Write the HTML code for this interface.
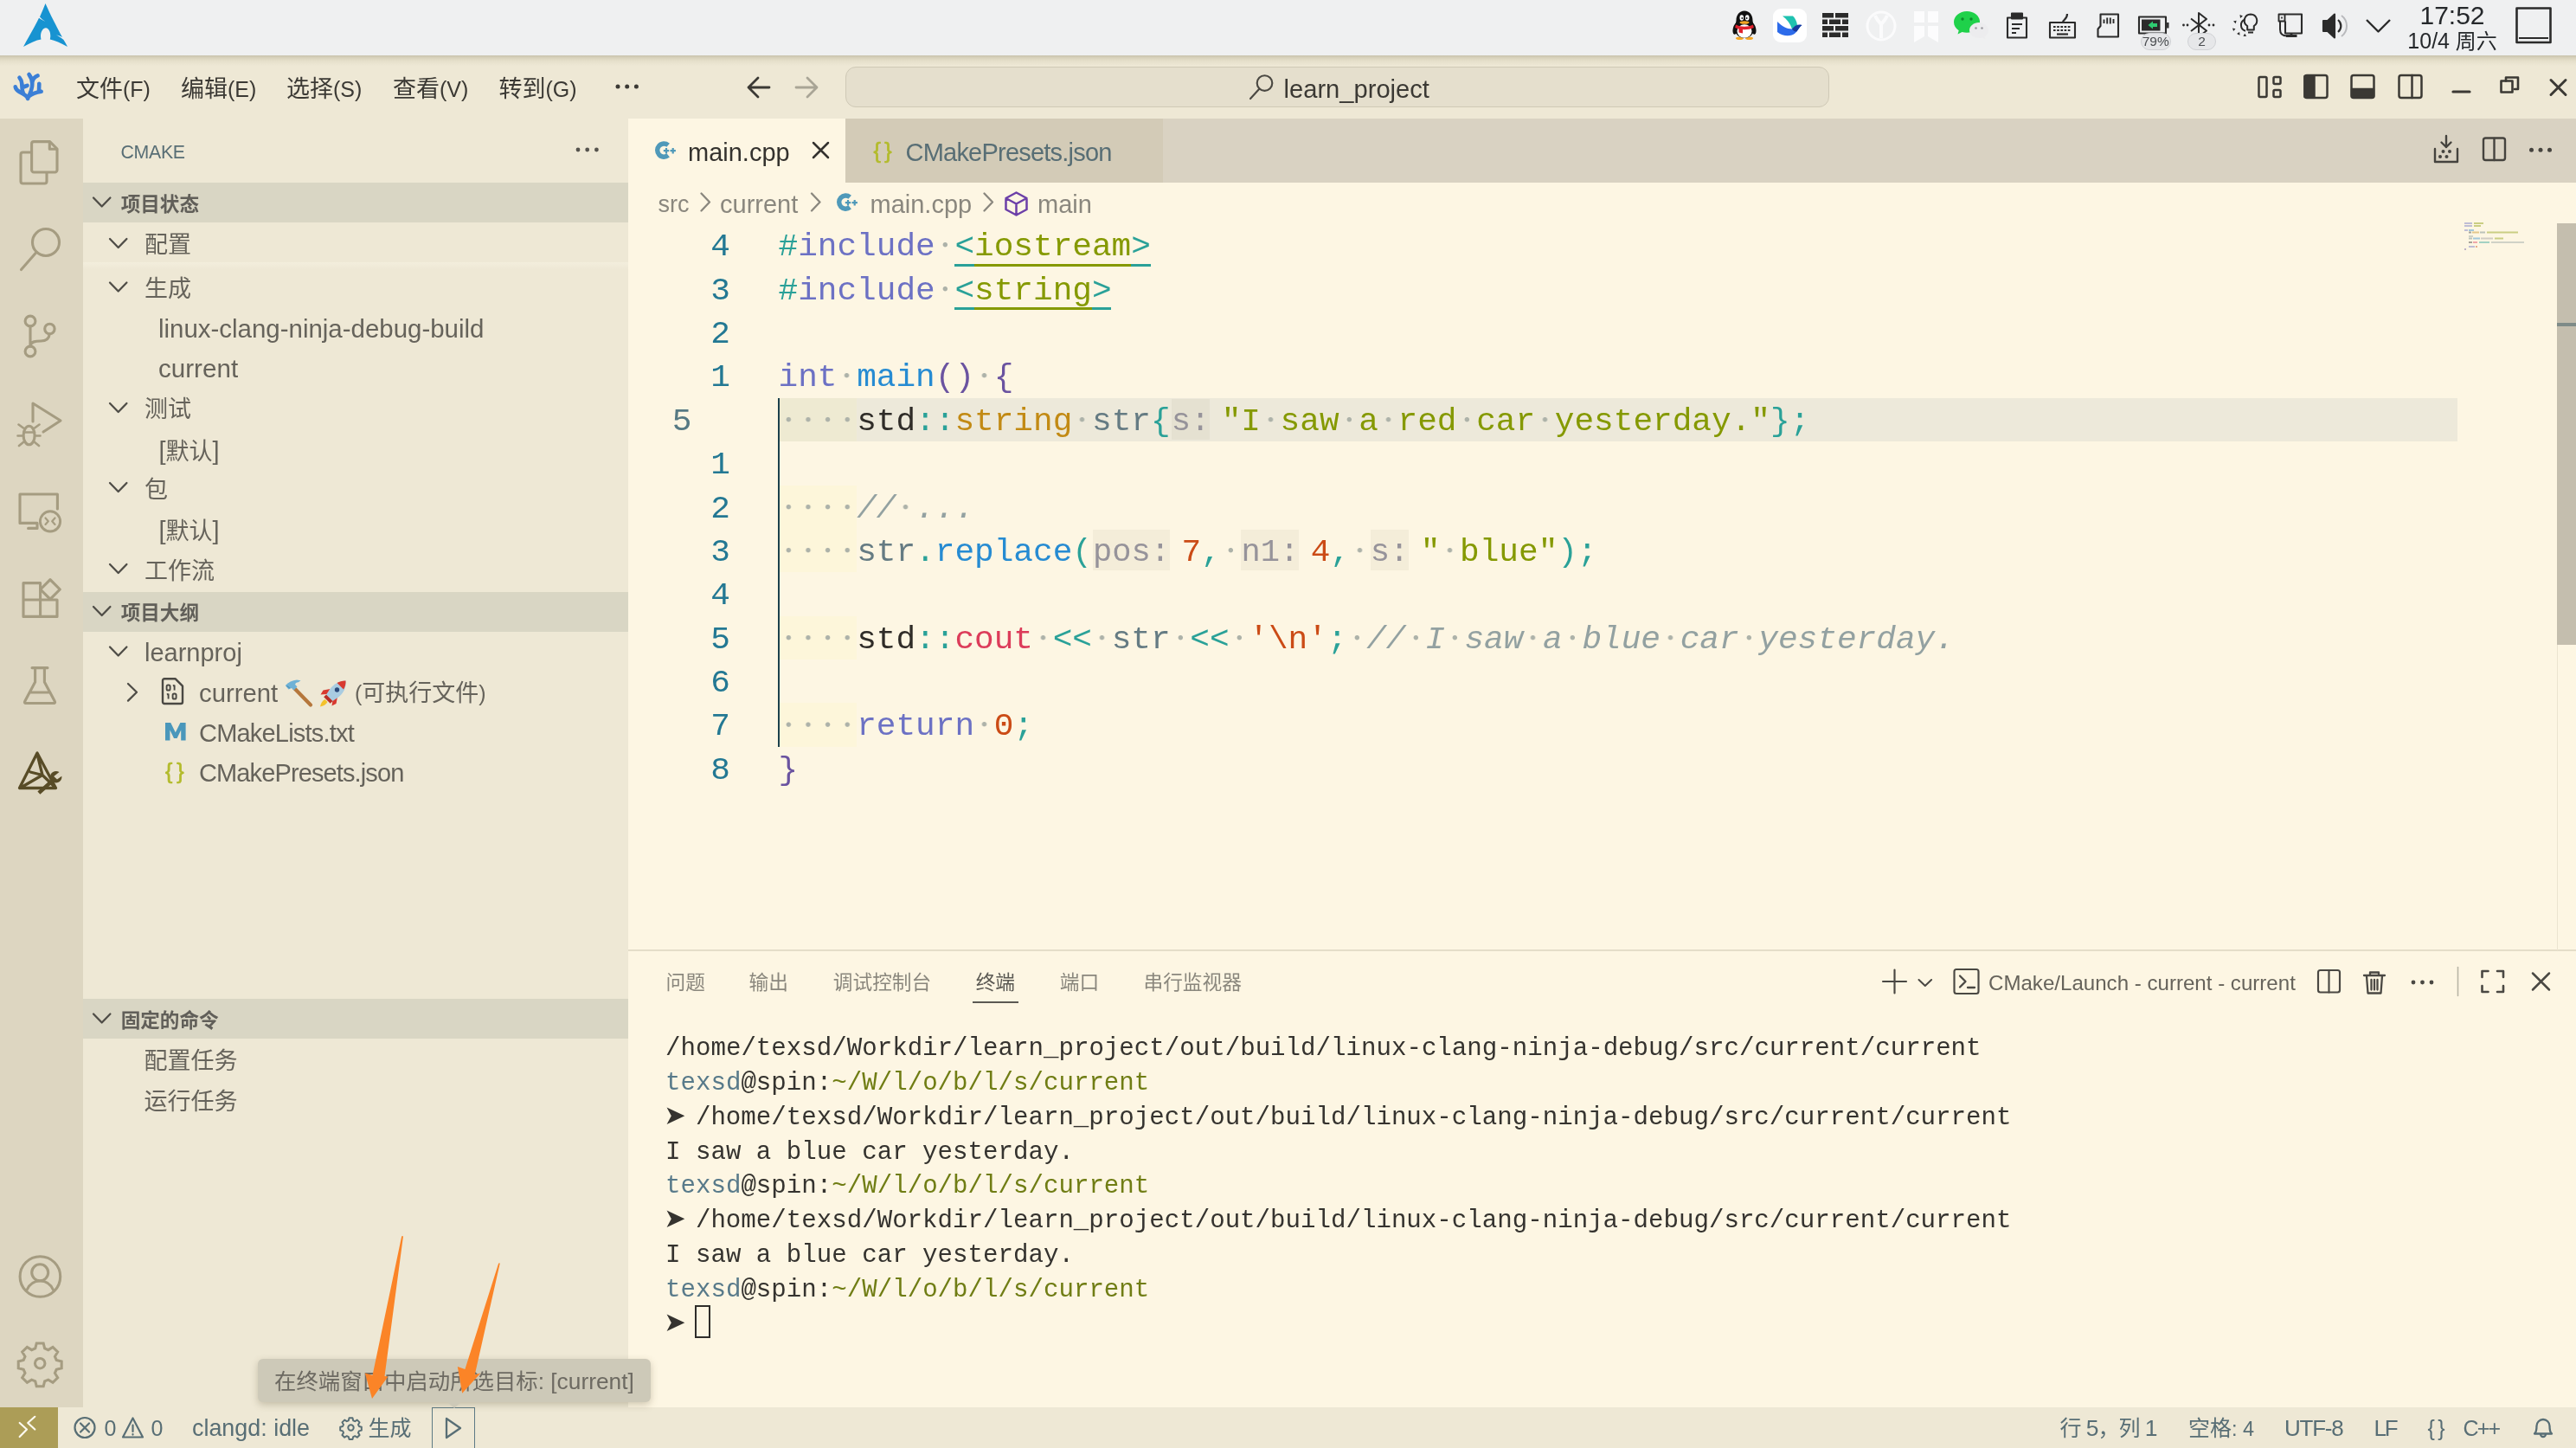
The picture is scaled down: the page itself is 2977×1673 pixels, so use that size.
<!DOCTYPE html>
<html lang="zh-CN">
<head>
<meta charset="utf-8">
<title>main.cpp - learn_project</title>
<style>
*{box-sizing:border-box;margin:0;padding:0}
html,body{width:2977px;height:1673px;overflow:hidden;background:#fdf6e3}
body{position:relative;will-change:transform;font-family:"Liberation Sans","Noto Sans CJK SC",sans-serif;color:#66635b;font-size:27px}
.a{position:absolute}
.t{position:absolute;white-space:nowrap;height:46px;line-height:46px}
.l{font-size:29px}
.m{font-size:25px}
svg{position:absolute;overflow:visible}
/* ---------- regions ---------- */
#topbar{left:0;top:0;width:2977px;height:64px;background:#eff0f1}
#topshadow{left:0;top:64px;width:2977px;height:12px;background:linear-gradient(#c8c2ac,#d9d3bd 25%,#e6e0cb 55%,#eee8d5)}
#titlebar{left:0;top:64px;width:2977px;height:73px;background:#eee8d5}
#activity{left:0;top:137px;width:96px;height:1489px;background:#ddd6c1}
#sidebar{left:96px;top:137px;width:630px;height:1489px;background:#eee8d5}
#tabbar{left:726px;top:137px;width:2251px;height:74px;background:#d9d2c2}
#editor{left:726px;top:211px;width:2251px;height:887px;background:#fdf6e3}
#panel{left:726px;top:1097px;width:2251px;height:529px;background:#fdf6e3;border-top:2px solid #e4ddc9}
#status{left:0;top:1626px;width:2977px;height:47px;background:#eee8d5}
.sech{position:absolute;left:96px;width:630px;height:46px;background:#d9d6c4}
.sech b{position:absolute;left:43.700px;top:2.500px;height:46px;line-height:45px;font-size:22.6px;font-weight:bold;color:#615f59;white-space:nowrap}
.row{color:#66635b}
/* code */
.cl{position:absolute;left:899.5px;height:50.4px;line-height:54.4px;white-space:pre;font-family:"Liberation Mono","DejaVu Sans Mono",monospace;font-size:37.75px;color:#657b83}
.ln{position:absolute;height:50.4px;line-height:54.4px;font-family:"Liberation Mono","DejaVu Sans Mono",monospace;font-size:37.75px;color:#237893;text-align:right;width:60px;left:784px}
.w{color:transparent;background:radial-gradient(circle at 50% 44.5%,#adb2a9 0,#adb2a9 2.2px,rgba(173,178,169,0) 3.2px) 0 0/22.65px 100% repeat-x}
.tl{color:#2aa198}.pu{color:#6c71c4}.gr{color:#859900}.bl{color:#268bd2}.dp{color:#6a53a0}.bk{color:#2f2c28}
.ye{color:#c28a14}.or{color:#cb4b16}.rd{color:#dc3c5a}.cm{color:#93a1a1;font-style:italic}
.ih{display:inline-block;margin:0 13.5px 0 1px;font-size:37.1px;line-height:52.4px;height:47.4px;vertical-align:top;margin-top:1.2px;background:rgba(110,100,60,.06);color:#96939a}
.ind{display:inline-block;height:50.4px;vertical-align:top;background:radial-gradient(circle at 50% 49.3%,#adb2a9 0,#adb2a9 2.2px,rgba(173,178,169,0) 3.2px) 0 0/22.65px 100% repeat-x,rgba(255,255,64,.055)}
/* terminal */
.tr{position:absolute;left:769px;height:39.85px;line-height:39.85px;white-space:pre;font-family:"Liberation Mono","DejaVu Sans Mono",monospace;font-size:29.13px;color:#35332f}
.tu{color:#587a8a}.tp{color:#707d14}
.ar{display:inline-block;width:17.450px;font-size:43px;line-height:0;vertical-align:-6px;text-indent:-1px}
.pt{position:absolute;top:1112px;height:46px;line-height:46px;font-size:22.7px;color:#8a877d;white-space:nowrap}
.st{position:absolute;top:1627px;height:46px;line-height:46px;font-size:25px;color:#586e75;white-space:nowrap}
.st .l{font-size:26.5px}
</style>
</head>
<body>
<div class="a" id="topbar"></div>
<div class="a" id="titlebar"></div>
<div class="a" id="topshadow"></div>
<div class="a" id="activity"></div>
<div class="a" id="sidebar"></div>
<div class="a" id="tabbar"></div>
<div class="a" id="editor"></div>
<div class="a" id="panel"></div>
<div class="a" id="status"></div>
<!-- desktop panel -->
<svg style="left:27px;top:4px" width="51" height="50" viewBox="0 0 51 50"><path d="M25.500 0C23 6 21.500 10 19 15.500c1.500 1.700 3.500 3.500 6.500 5.500c-3.500-1.500-5.500-2.800-7.500-4.200C15.500 22.500 10 32 0 50c8-4.500 14.500-7.500 20.500-8.500c-.3-1-.5-2.500-.5-4c.2-5.500 3-9.500 6-9.300c3.500 .3 5.500 4.800 5.300 9.800c-.1 1.200-.3 2.500-.5 3.500c5.700 1.100 12.200 4 20.200 8.500c-1.500-3-3-5.500-4.500-8c-2-1.500-4-3.500-8.500-5.800c3 .8 5.200 1.800 7 2.800C32 14.500 30.500 11 25.500 0z" fill="#1793d1"/></svg>
<!-- QQ penguin -->
<svg style="left:2000px;top:12px" width="32" height="35" viewBox="0 0 32 35"><ellipse cx="6" cy="21" rx="3.200" ry="7" transform="rotate(14 6 21)" fill="#111"/><ellipse cx="26" cy="21" rx="3.200" ry="7" transform="rotate(-14 26 21)" fill="#111"/><ellipse cx="10.500" cy="32.300" rx="4.500" ry="1.800" fill="#f5a623"/><ellipse cx="21.500" cy="32.300" rx="4.500" ry="1.800" fill="#f5a623"/><path d="M16 0.500c-6 0-9.500 5-9.500 11c0 2-1 4-1.500 6c-1.500 6 2 14.500 11 14.500s12.500-8.500 11-14.500c-.5-2-1.500-4-1.500-6c0-6-3.500-11-9.500-11z" fill="#111"/><ellipse cx="16" cy="24" rx="8.500" ry="7.800" fill="#fff"/><path d="M6 16.500c6 3 14 3 20 0l.8 3.500c-6.500 3-15 3-21.600 0z" fill="#e0202c"/><path d="M9.500 19h4.500v7.500l-4.500-1z" fill="#e0202c"/><ellipse cx="12.800" cy="8.500" rx="2.300" ry="3.200" fill="#fff"/><ellipse cx="19.200" cy="8.500" rx="2.300" ry="3.200" fill="#fff"/><circle cx="13.400" cy="9" r="1" fill="#111"/><circle cx="18.600" cy="9" r="1" fill="#111"/><ellipse cx="16" cy="14" rx="5.500" ry="1.800" fill="#f5a623"/></svg>
<!-- feishu-like -->
<div class="a" style="left:2049px;top:10px;width:39px;height:39px;border-radius:9px;background:#fff"></div>
<svg style="left:2049px;top:10px" width="39" height="39" viewBox="0 0 39 39"><path d="M11 8.500h12c3 3 4.500 6.500 5 10.500l-6 4.500C20 17 16 12 11 8.500z" fill="#1fc2b0"/><path d="M5 15c5 5 11 8.500 17 8.500c3.500-3.500 7-5 11.500-4.500c-3 2-4.500 6-7.500 9c-5 4.500-14 4.500-21-1z" fill="#2d6bea"/><path d="M22 23.500c3-4 7-6 11.500-4.500c-2.500 1.500-4 4.500-6 7.500c-2 .5-4-1-5.500-3z" fill="#173a9e"/></svg>
<!-- firewall bricks -->
<svg style="left:2106px;top:15px" width="30" height="28" viewBox="0 0 30 28" fill="#2b2b2b"><rect x="0" y="0" width="13" height="5.500"/><rect x="15" y="0" width="15" height="5.500"/><rect x="0" y="7.500" width="6" height="5.500"/><rect x="8" y="7.500" width="13" height="5.500"/><rect x="23" y="7.500" width="7" height="5.500"/><rect x="0" y="15" width="13" height="5.500"/><rect x="15" y="15" width="15" height="5.500"/><rect x="0" y="22.500" width="6" height="5.500"/><rect x="8" y="22.500" width="13" height="5.500"/><rect x="23" y="22.500" width="7" height="5.500"/></svg>
<!-- white circle Y -->
<svg style="left:2156px;top:12px" width="36" height="36" fill="none" stroke="#fbfbfc" stroke-width="3"><circle cx="18" cy="18" r="16"/><path d="M11 6c2 5 5 8 7 10c2-2 5-5 7-10M18 16v16" stroke-width="4"/></svg>
<!-- white bookmark -->
<svg style="left:2212px;top:13px" width="28" height="36" fill="#fcfcfd"><path d="M0 0h12v13H0zM16 0h12v13H16zM0 17h12v12l-12 7zM16 17h12v19l-12-7z"/></svg>
<!-- wechat -->
<svg style="left:2258px;top:12px" width="40" height="34" viewBox="0 0 40 34"><path d="M15 1C6.700 1 0 6.600 0 13.500c0 4 2.200 7.500 5.700 9.800L4.500 27.500l5-2.600c1.700 .5 3.600 .8 5.500 .8c8.300 0 15-5.600 15-12.500S23.300 1 15 1z" fill="#1fd14a"/><circle cx="10" cy="10" r="1.700" fill="#0c8a2c"/><circle cx="20" cy="10" r="1.700" fill="#0c8a2c"/><path d="M29 14c-6 0-11 4-11 9s5 9 11 9c1.300 0 2.600-.2 3.800-.6l3.700 1.900l-.9-3.100c2.700-1.700 4.400-4.300 4.400-7.200c0-5-5-9-11-9z" fill="#ececee"/><circle cx="25.500" cy="20.500" r="1.300" fill="#9a9a9f"/><circle cx="32.500" cy="20.500" r="1.300" fill="#9a9a9f"/></svg>
<!-- clipboard, keyboard, sdcard, battery, bluetooth, bulb, monitor, volume, chevron, desktop -->
<svg style="left:2300px;top:0" width="677" height="64" fill="none" stroke="#2b2b2b" stroke-width="2.100" stroke-linejoin="round">
<rect x="20" y="20.500" width="22" height="23"/><rect x="25" y="15.500" width="12" height="6" fill="#2b2b2b"/><path d="M25 28h12M25 33h9M25 38h5" stroke-width="2"/>
<rect x="69" y="26" width="29" height="17.500"/><path d="M84 26c0-4 5-3 5-10" stroke-width="2.200"/><path d="M73 31h21M73 35h21" stroke-width="2.200" stroke-dasharray="2.600 1.600"/><path d="M77 39.500h13" stroke-width="2.200"/>
<path d="M127.500 16.500h20.500v26h-23.500v-9l3-3.500z"/><path d="M131.500 22.500v4.500M135.200 20.500v7M138.800 20.500v7M142.500 22v5" stroke-width="1.900"/>
<rect x="172" y="19.500" width="31" height="19"/><path d="M205.300 26v6.500" stroke-width="2.400"/><rect x="175" y="22.500" width="21.500" height="13" fill="#2b2b2b" stroke="none"/><path d="M182.500 29l5.500-4.500v2.500h5v4h-5V33.500z" fill="#2ecc71" stroke="none"/>
<path d="M232 21.500l18 14l-9 7V15l9 7l-18 14" stroke-width="2"/><g fill="#2b2b2b" stroke="none"><circle cx="223.500" cy="29" r="1.400"/><circle cx="228" cy="29" r="1.400"/><circle cx="253" cy="29" r="1.400"/><circle cx="258" cy="29" r="1.400"/></g>
<path d="M301 16.500a7.300 7.300 0 0 1 3.800 13.500v4.500h-7.600v-4.500A7.300 7.300 0 0 1 301 16.500zM298 37.500h6" stroke-width="2"/><path d="M294.500 22.500a7 7 0 0 0 .5 13.300" stroke-width="2"/><g fill="#2b2b2b" stroke="none"><path d="M288.500 17l3.400 1.600l-2.900 2.300zM281 24.500l3.600-.8l-.9 3.500zM280 32.500l3.500 .8l-2.400 2.700zM285 39l3.100-1.900l.4 3.600zM292.500 42l1.600-3.300l2.100 3z"/></g>
<path d="M341 24.500v14h19v-22h-19"/><rect x="333.500" y="16.500" width="7" height="8" stroke-width="1.900"/><path d="M337 19.500v2" stroke-width="1.700"/><path d="M335 25v9c0 5 3 7.500 8 7.500" stroke-width="2"/><path d="M342 41.500h12.500M348 39v2" stroke-width="2.800"/>
<path d="M385 24h5l8-7.500v27l-8-7.500h-5z" fill="#2b2b2b"/><path d="M402 23a9 9 0 0 1 0 14" stroke-width="2.200"/><path d="M406 18a15 15 0 0 1 0 24" stroke="#b9babd" stroke-width="2"/>
<path d="M435 23l13.500 13.500L462 23" stroke-width="2.400"/>
<rect x="608.500" y="9.500" width="39" height="39.500" stroke-width="2.600"/><path d="M611 44h34" stroke-width="2.200"/>
</svg>
<div class="a" style="left:2474px;top:37.500px;width:34.500px;height:20px;border-radius:10px;background:#e6e7e9;border:1px solid #cfd1d4"></div>
<div class="t" style="left:2474px;top:37.500px;width:34.500px;height:20px;line-height:20px;text-align:center;font-size:15.500px;color:#4a4d50">79%</div>
<div class="a" style="left:2528px;top:37.500px;width:33px;height:20px;border-radius:10px;background:#e6e7e9;border:1px solid #cfd1d4"></div>
<div class="t" style="left:2528px;top:37.500px;width:33px;height:20px;line-height:20px;text-align:center;font-size:15.500px;color:#4a4d50">2</div>
<div class="t" style="left:2780px;top:1px;width:108px;height:34px;line-height:34px;text-align:center;font-size:30px;color:#25282b">17:52</div>
<div class="t" style="left:2775px;top:31px;width:118px;height:32px;line-height:32px;text-align:center;font-size:24px;color:#25282b"><span style="font-size:25px">10/4</span> 周六</div>

<!-- title bar -->
<svg style="left:0;top:0" width="70" height="130" fill="none" stroke="#3b7fd6" stroke-width="4.600" stroke-linecap="round" stroke-linejoin="round"><path d="M32.200 114C31 110 27 108.500 23 106.500C19.500 104.500 18 102.500 17.700 100.200M27 108C25 104 25.500 100 25.300 96.700C25 93.500 24 91.500 22.500 89.800M25.800 101C28 100 30 99.500 31.500 98.800M32.200 113.500C35 108 37.500 102 37.300 96.700C37 92 35.500 88.500 33.500 86M37.300 95C38 91 40.500 88.500 43.600 87.400M33 111.500C37 108 42 106.500 47.700 105.700M45 105.500L45.300 96.700"/></svg>
<div class="t" style="left:88px;top:79.500px;color:#3b3934">文件<span class="m">(F)</span></div>
<div class="t" style="left:209px;top:79.500px;color:#3b3934">编辑<span class="m">(E)</span></div>
<div class="t" style="left:331px;top:79.500px;color:#3b3934">选择<span class="m">(S)</span></div>
<div class="t" style="left:454px;top:79.500px;color:#3b3934">查看<span class="m">(V)</span></div>
<div class="t" style="left:576.500px;top:79.500px;color:#3b3934">转到<span class="m">(G)</span></div>
<svg style="left:710px;top:95px" width="30" height="10"><g fill="#3b3934"><circle cx="4" cy="5" r="2.500"/><circle cx="14.700" cy="5" r="2.500"/><circle cx="25.400" cy="5" r="2.500"/></g></svg>
<svg style="left:860px;top:85px" width="90" height="32" fill="none" stroke-width="2.800" stroke-linecap="round" stroke-linejoin="round"><path d="M29 16H5M16 5L5 16l11 11" stroke="#3b3934"/><path d="M60 16h24M73 5l11 11l-11 11" stroke="#a9a596"/></svg>
<div class="a" style="left:977px;top:77px;width:1137px;height:47px;border-radius:12px;background:#e5dfcd;border:1.500px solid #cfc9b6"></div>
<svg style="left:1443px;top:85px" width="30" height="31" fill="none" stroke="#4a4842" stroke-width="2.150" stroke-linecap="round"><circle cx="18.500" cy="11" r="8.800"/><path d="M12.500 17.500L2 29"/></svg>
<div class="t l" style="left:1483.500px;top:79.500px;color:#3b3934;font-size:29.150px">learn_project</div>
<svg style="left:2600px;top:80px" width="377" height="42" fill="none" stroke="#3b3934" stroke-width="2.500" stroke-linejoin="round" stroke-linecap="round">
<rect x="10.500" y="9" width="9" height="23" rx="1.500"/><rect x="27.500" y="9" width="8" height="8" rx="1.500"/><rect x="27.500" y="24" width="8" height="8" rx="1.500"/>
<rect x="63.500" y="7" width="26" height="26" rx="2.500"/><path d="M63.500 8h11v24h-11z" fill="#3b3934"/>
<rect x="117.500" y="7" width="26" height="26" rx="2.500"/><path d="M118 23h25v9h-25z" fill="#3b3934"/>
<rect x="172.500" y="7" width="26" height="26" rx="2.500"/><path d="M187.500 7v26"/>
<path d="M235 26h19" stroke-width="3.200"/>
<path d="M296 13.500v-4h14v13.500h-4" stroke-width="2.600"/><rect x="290.500" y="13.500" width="13" height="13" stroke-width="2.600"/>
<path d="M348 15.500l17 17M365 15.500l-17 17" stroke-width="3" transform="translate(0,-3)"/>
</svg>

<!-- activity bar -->
<svg style="left:0;top:137px" width="96" height="1489" fill="none" stroke="#a59c81" stroke-width="3.100" stroke-linecap="round" stroke-linejoin="round">
<!-- files  (y offset -137) -->
<path d="M39.100 26.600h18.500l8.400 8.400v24.500a2.500 2.500 0 0 1-2.500 2.500h-24.400a2.500 2.500 0 0 1-2.500-2.500v-30.400a2.500 2.500 0 0 1 2.500-2.500z"/><path d="M57.300 27v8.300h8.300"/><path d="M36 39h-9.500a2.500 2.500 0 0 0-2.500 2.500v31a2.500 2.500 0 0 0 2.500 2.500h25a2.500 2.500 0 0 0 2.500-2.500v-10"/>
<!-- search -->
<circle cx="53" cy="143" r="15.500"/><path d="M42 154.500L24.500 174.500"/>
<!-- scm -->
<circle cx="35" cy="234" r="5.900"/><circle cx="35" cy="269" r="5.900"/><circle cx="57.400" cy="243" r="5.700"/><path d="M35 240v23M57.200 249c-.5 5.500-4.500 8-10 8c-6 0-11 .5-12 5"/>
<!-- debug -->
<path d="M38 350v-21l32 20l-20 13"/><ellipse cx="33.600" cy="366" rx="6.500" ry="10.800"/><path d="M27.500 362.500h12.500M27 357.500l-5.500-4M40 357.500l5.500-4M26.500 366.500h-6M40.500 366.500h6M27.500 373.500l-5.500 4.500M39.500 373.500l5.500 4.500" stroke-width="2.600"/>
<!-- remote explorer -->
<path d="M66.400 451v-17h-43.400v33.400h20v6h-10.400"/><circle cx="58" cy="465.400" r="11.600" stroke-width="2.900"/><path d="M52.500 461.500l3.300 3.700l-3.300 3.700M63.500 461.500l-3.300 3.700l3.300 3.700" stroke-width="2.200"/>
<!-- extensions -->
<path d="M27 536.600h19.600v19.400h-19.600zM27 556h39v19.400h-39zM46.600 556v19.400"/><rect x="50" y="536" width="16" height="16" transform="rotate(45 58 544)"/>
<!-- flask -->
<path d="M37 634.600h18M40.600 635v16l-12 22.500a1.300 1.300 0 0 0 1.200 2h32.400a1.300 1.300 0 0 0 1.200-2l-12-22.500v-16M34.500 663h23.500"/>
<!-- cmake active -->
<g stroke="#584c27" stroke-width="3.300"><path d="M43 733l-20.500 40.500h42zM43 734l6 24.500l-25 14.500M49 758.500l14 13.500M35 755l14 3.500"/></g>
<path d="M68.500 755c-3.500-2.200-8-1-9.800 2.500c-1 2.300-.8 4.300 .2 6l-15.500 14l3 3.300l15.500-14c2.500 1.200 6 .8 8.200-2c1.200-1.500 1.500-3.500 1.200-5l-5.300 3.800l-3.800-3.600z" fill="#584c27" stroke="none"/>
<!-- account -->
<circle cx="46.400" cy="1338" r="23.300"/><circle cx="46.200" cy="1333.300" r="9.500"/><path d="M31 1353.500c3-7 8-10.500 15.300-10.500s12.300 3.500 15.300 10.500"/>
<!-- gear -->
<g transform="translate(46.200 1438.200) scale(.990)" stroke-linejoin="miter"><circle r="5.800"/><path d="M-4-23.500h8l1.500 6l4.200 1.800l5.300-3.300l5.700 5.700l-3.300 5.300l1.800 4.200l6 1.500v8l-6 1.500l-1.800 4.200l3.300 5.300l-5.700 5.700l-5.300-3.300l-4.200 1.800l-1.500 6h-8l-1.500-6l-4.200-1.800l-5.300 3.300l-5.700-5.700l3.300-5.300l-1.800-4.200l-6-1.500v-8l6-1.500l1.800-4.200l-3.300-5.300l5.700-5.700l5.300 3.300l4.200-1.800z"/></g>
</svg>

<!-- sidebar -->
<div class="t" style="left:139.5px;top:153px;font-size:21.300px;color:#586e75;letter-spacing:-.3px">CMAKE</div>
<svg style="left:664px;top:168px" width="30" height="10"><g fill="#55534d"><circle cx="4" cy="5" r="2.4"/><circle cx="14.7" cy="5" r="2.4"/><circle cx="25.4" cy="5" r="2.4"/></g></svg>
<div class="sech" style="top:211px"><b>项目状态</b></div>
<div class="sech" style="top:683.7px"><b>项目大纲</b></div>
<div class="sech" style="top:1154px"><b>固定的命令</b></div>
<div class="a" style="left:96px;top:303px;width:630px;height:8px;background:linear-gradient(#f3eedd,#eee8d5)"></div>
<svg style="left:0;top:0" width="740" height="1300" fill="none" stroke="#4f4d47" stroke-width="2.300" stroke-linecap="round" stroke-linejoin="round">
<path d="M108 228.5l9.700 10l9.700-10"/>
<path d="M108 701l9.700 10l9.700-10"/>
<path d="M108 1171.5l9.700 10l9.700-10"/>
<path d="M127 276l9.700 10l9.700-10"/>
<path d="M127 326.5l9.700 10l9.700-10"/>
<path d="M127 466l9.700 10l9.700-10"/>
<path d="M127 558l9.700 10l9.700-10"/>
<path d="M127 652l9.700 10l9.700-10"/>
<path d="M127 747.5l9.700 10l9.700-10"/>
<path d="M148 790l10 9.800l-10 9.800"/>
</svg>
<div class="t row" style="left:167px;top:260px">配置</div>
<div class="t row" style="left:167px;top:310.500px">生成</div>
<div class="t row l" style="left:183px;top:356.500px;font-size:29.450px">linux-clang-ninja-debug-build</div>
<div class="t row l" style="left:183px;top:402.500px;font-size:29.600px">current</div>
<div class="t row" style="left:167px;top:450px">测试</div>
<div class="t row" style="left:183.5px;top:497.500px"><span class="l">[</span>默认<span class="l">]</span></div>
<div class="t row" style="left:167px;top:543px">包</div>
<div class="t row" style="left:183.5px;top:590px"><span class="l">[</span>默认<span class="l">]</span></div>
<div class="t row" style="left:167px;top:636.500px">工作流</div>
<div class="t row l" style="left:167px;top:731px">learnproj</div>
<div class="t row" style="left:230px;top:778px"><span class="l" style="font-size:29.300px">current</span></div>
<div class="t row" style="left:410px;top:778px"><span class="m">(</span>可执行文件<span class="m">)</span></div>
<div class="t row l" style="left:230px;top:823.500px;font-size:29px;letter-spacing:-.800px">CMakeLists.txt</div>
<div class="t row l" style="left:230px;top:870px;font-size:29px;letter-spacing:-.880px">CMakePresets.json</div>
<div class="t row" style="left:166.5px;top:1202.500px">配置任务</div>
<div class="t row" style="left:166.5px;top:1249.500px">运行任务</div>
<!-- file icons in tree -->
<svg style="left:186px;top:783px" width="27" height="31" fill="none" stroke="#4a4843" stroke-width="2.4" stroke-linejoin="round"><path d="M2 3.2a2 2 0 0 1 2-2h12.5l8.5 8.5v18.3a2 2 0 0 1-2 2h-19a2 2 0 0 1-2-2z"/><g stroke-width="1.900"><rect x="6.600" y="8.500" width="4" height="6" rx="1.600"/><path d="M15.6 8.5v6M14 9.6l1.6-1.1"/><path d="M8.6 18.5v6M7 19.6l1.6-1.1"/><rect x="13.6" y="18.5" width="4" height="6" rx="1.6"/></g></svg>
<svg style="left:190.5px;top:834.5px" width="24" height="21"><path d="M0 20.5V0h6.2l5.6 11.2L17.4 0h6.2v20.5h-5.4V8.6l-4.6 9.4h-3.6L5.4 8.6v11.9z" fill="#4a97bb"/></svg>
<div class="t" style="left:191px;top:867.500px;font-size:25px;color:#b3bb2c;letter-spacing:5px;-webkit-text-stroke:.7px #b3bb2c">{}</div>
<!-- hammer + rocket -->
<svg style="left:329px;top:785px" width="33" height="33"><path d="M11 10L30 29.500" stroke="#b5773c" stroke-width="4.200" stroke-linecap="round" fill="none"/><path d="M0.800 7C4 3.300 9 1 14 0.600L18.500 1.200L15.800 3.200C13.600 3.400 12.300 4.400 12 5.800L14.500 8.500L10.500 12.500L8 10L4.500 11.500z" fill="#6fb2d6"/><path d="M2.500 7.500L6 10" stroke="#4e93b8" stroke-width="1.200" fill="none"/></svg>
<svg style="left:369px;top:785px" width="33" height="33"><path d="M6.500 23C3.500 24.500 1.500 28 1 31.500C4.500 31 8 29 9.500 26z" fill="#f4c22b"/><path d="M12.500 11L4.500 12.500L1.500 17.500L9 17zM21 20L19.500 28L14.500 30.500L15.500 23.500z" fill="#d8392f"/><path d="M30.500 1.500C24 1.500 17 5 12.500 11L8 17.500L15.500 25L22 20.500C28 16 31.500 9 30.500 1.500z" fill="#a9cce1"/><path d="M30.500 1.500C27 1.300 23.500 2.200 20.500 4L28 11.500C29.800 8.500 30.800 5 30.500 1.500z" fill="#d8392f"/><circle cx="20.500" cy="12" r="2.700" fill="#2b4a7a"/><path d="M8 17.500l7.500 7.500l-2.800 2.800l-7.500-7.500z" fill="#b92e27"/></svg>

<!-- tabs -->
<div class="a" style="left:726px;top:137px;width:251px;height:74px;background:#fdf6e3"></div>
<div class="a" style="left:977px;top:137px;width:367px;height:74px;background:#d3cbb7"></div>
<svg style="left:757px;top:162px" width="26" height="24" viewBox="0 0 26 24"><path d="M15.190 5.780A7.600 7.600 0 1 0 15.190 17.420" fill="none" stroke="#4f99b9" stroke-width="5.400"/><path d="M13 9v6.400M9.800 12.200h6.400M20.700 9v6.400M17.500 12.200h6.400" stroke="#4f99b9" stroke-width="2.200" fill="none"/></svg>
<div class="t l" style="left:795px;top:152.500px;color:#34322e">main.cpp</div>
<svg style="left:938px;top:163px" width="22" height="22" fill="none" stroke="#34322e" stroke-width="2.500" stroke-linecap="round"><path d="M2 2l17 17M19 2L2 19"/></svg>
<div class="t" style="left:1009.500px;top:150.500px;font-size:25px;color:#b3bb2c;letter-spacing:4.500px;-webkit-text-stroke:.7px #b3bb2c">{}</div>
<div class="t l" style="left:1046.500px;top:152.500px;color:#586e75;font-size:29px;letter-spacing:-.780px">CMakePresets.json</div>
<svg style="left:2806px;top:150px" width="160" height="46" fill="none" stroke="#45433e" stroke-width="2.400" stroke-linejoin="round" stroke-linecap="round">
<path d="M8 22v15h26V22"/><path d="M21 7v13M15.500 14.500L21 20l5.500-5.500"/><g fill="#45433e" stroke="none"><circle cx="17.500" cy="25" r="2"/><circle cx="25" cy="25" r="2"/><circle cx="14" cy="31" r="2"/><circle cx="21.500" cy="31" r="2"/></g>
<rect x="64" y="9.500" width="25" height="25.500" rx="2.500"/><path d="M76.500 10v25"/>
<g fill="#45433e" stroke="none"><circle cx="119.500" cy="23.200" r="2.500"/><circle cx="130" cy="23.200" r="2.500"/><circle cx="140.500" cy="23.200" r="2.500"/></g>
</svg>
<!-- breadcrumbs -->
<div class="t l" style="left:760.500px;top:213px;color:#8a877e;font-size:27px">src</div>
<div class="t l" style="left:832px;top:213px;color:#8a877e">current</div>
<div class="t l" style="left:1005.500px;top:213px;color:#8a877e">main.cpp</div>
<div class="t l" style="left:1199px;top:213px;color:#8a877e">main</div>
<svg style="left:726px;top:211px" width="560" height="48" fill="none" stroke="#8a877e" stroke-width="2.300" stroke-linecap="round" stroke-linejoin="round">
<path d="M84.500 12.500l9.500 10l-9.500 10M212 12.500l9.500 10l-9.500 10M411.500 12.500l9.500 10l-9.500 10"/>
<g stroke="#6c3fa8" stroke-width="2.500"><path d="M448.500 11.500l12 6.500v13l-12 6.500l-12-6.500v-13zM436.500 18l12 6.500l12-6.500M448.500 24.500v13"/></g>
<g transform="translate(241 11)"><path d="M15.190 5.780A7.600 7.600 0 1 0 15.190 17.420" fill="none" stroke="#4f99b9" stroke-width="5.400" stroke-linecap="butt"/><path d="M13 9v6.400M9.800 12.200h6.400M20.700 9v6.400M17.500 12.200h6.400" stroke="#4f99b9" stroke-width="2.200" stroke-linecap="butt" fill="none"/></g>
</svg>
<!-- minimap + scrollbar -->
<svg style="left:2848px;top:257px" width="72" height="32"><g opacity=".42"><rect x="0" y="0" width="9" height="2" fill="#6c71c4"/><rect x="11" y="0" width="11" height="2" fill="#859900"/><rect x="0" y="3" width="9" height="2" fill="#6c71c4"/><rect x="11" y="3" width="8" height="2" fill="#859900"/><rect x="0" y="8" width="4" height="2" fill="#6c71c4"/><rect x="5" y="8" width="6" height="2" fill="#268bd2"/><rect x="5" y="10.500" width="3" height="2" fill="#333"/><rect x="9" y="10.500" width="8" height="2" fill="#c28a14"/><rect x="18" y="10.500" width="6" height="2" fill="#657b83"/><rect x="26" y="10.500" width="36" height="2" fill="#859900"/><rect x="5" y="15" width="5" height="2" fill="#93a1a1"/><rect x="5" y="17.500" width="4" height="2" fill="#657b83"/><rect x="10" y="17.500" width="8" height="2" fill="#268bd2"/><rect x="19" y="17.500" width="14" height="2" fill="#96939a"/><rect x="35" y="17.500" width="10" height="2" fill="#859900"/><rect x="5" y="22" width="4" height="2" fill="#333"/><rect x="10" y="22" width="5" height="2" fill="#dc3c5a"/><rect x="17" y="22" width="12" height="2" fill="#2aa198"/><rect x="31" y="22" width="38" height="2" fill="#93a1a1"/><rect x="5" y="27" width="7" height="2" fill="#6c71c4"/><rect x="13" y="27" width="2" height="2" fill="#cb4b16"/><rect x="0" y="30" width="2" height="2" fill="#6a53a0"/></g></svg>
<div class="a" style="left:2955px;top:257.500px;width:22px;height:487.500px;background:#c4beae"></div>
<div class="a" style="left:2955px;top:372.800px;width:22px;height:3.800px;background:#7e8b88"></div>
<div class="a" style="left:2954.500px;top:745px;width:1px;height:353px;background:#ebe4d0"></div>

<!-- editor -->
<div class="a" style="left:899px;top:459.8px;width:1940.5px;height:50.2px;background:#ede9da"></div>
<div class="ln" style="top:258.3px">4</div>
<div class="cl" style="top:258.3px"><span class="tl">#</span><span class="pu">include</span><span class="w">·</span><span class="tl">&lt;</span><span class="gr">iostream</span><span class="tl">&gt;</span></div>
<div class="ln" style="top:308.7px">3</div>
<div class="cl" style="top:308.7px"><span class="tl">#</span><span class="pu">include</span><span class="w">·</span><span class="tl">&lt;</span><span class="gr">string</span><span class="tl">&gt;</span></div>
<div class="ln" style="top:359.0px">2</div>
<div class="ln" style="top:409.4px">1</div>
<div class="cl" style="top:409.4px"><span class="pu">int</span><span class="w">·</span><span class="bl">main</span><span class="dp">()</span><span class="w">·</span><span class="dp">{</span></div>
<div class="ln" style="top:459.8px;left:739.5px;color:#567983">5</div>
<div class="cl" style="top:459.8px"><span class="w ind">····</span><span class="bk">std</span><span class="tl">::</span><span class="ye">string</span><span class="w">·</span>str<span class="tl">{</span><span class="ih">s:</span><span class="gr">"I</span><span class="w">·</span><span class="gr">saw</span><span class="w">·</span><span class="gr">a</span><span class="w">·</span><span class="gr">red</span><span class="w">·</span><span class="gr">car</span><span class="w">·</span><span class="gr">yesterday."</span><span class="tl">};</span></div>
<div class="ln" style="top:510.1px">1</div>
<div class="ln" style="top:560.5px">2</div>
<div class="cl" style="top:560.5px"><span class="w ind">····</span><span class="cm">//</span><span class="w">·</span><span class="cm">...</span></div>
<div class="ln" style="top:610.9px">3</div>
<div class="cl" style="top:610.9px"><span class="w ind">····</span>str<span class="tl">.</span><span class="bl">replace</span><span class="tl">(</span><span class="ih">pos:</span><span class="or">7</span><span class="tl">,</span><span class="w">·</span><span class="ih">n1:</span><span class="or">4</span><span class="tl">,</span><span class="w">·</span><span class="ih">s:</span><span class="gr">"</span><span class="w">·</span><span class="gr">blue"</span><span class="tl">);</span></div>
<div class="ln" style="top:661.3px">4</div>
<div class="ln" style="top:711.6px">5</div>
<div class="cl" style="top:711.6px"><span class="w ind">····</span><span class="bk">std</span><span class="tl">::</span><span class="rd">cout</span><span class="w">·</span><span class="tl">&lt;&lt;</span><span class="w">·</span>str<span class="w">·</span><span class="tl">&lt;&lt;</span><span class="w">·</span><span class="or">'&#92;n'</span><span class="tl">;</span><span class="w">·</span><span class="cm">//</span><span class="w">·</span><span class="cm">I</span><span class="w">·</span><span class="cm">saw</span><span class="w">·</span><span class="cm">a</span><span class="w">·</span><span class="cm">blue</span><span class="w">·</span><span class="cm">car</span><span class="w">·</span><span class="cm">yesterday.</span></div>
<div class="ln" style="top:762.0px">6</div>
<div class="ln" style="top:812.4px">7</div>
<div class="cl" style="top:812.4px"><span class="w ind">····</span><span class="pu">return</span><span class="w">·</span><span class="or">0</span><span class="tl">;</span></div>
<div class="ln" style="top:862.7px">8</div>
<div class="cl" style="top:862.7px"><span class="dp">}</span></div>
<div class="a" style="left:899.2px;top:459.8px;width:2.3px;height:403px;background:#1c414c"></div>
<div class="a" style="left:1103.3px;top:304.7px;width:226.5px;height:3.3px;background:#859900"></div>
<div class="a" style="left:1103.3px;top:304.7px;width:22.6px;height:3.3px;background:#2aa198"></div>
<div class="a" style="left:1307.2px;top:304.7px;width:22.6px;height:3.3px;background:#2aa198"></div>
<div class="a" style="left:1103.3px;top:355.1px;width:181.2px;height:3.3px;background:#859900"></div>
<div class="a" style="left:1103.3px;top:355.1px;width:22.6px;height:3.3px;background:#2aa198"></div>
<div class="a" style="left:1261.9px;top:355.1px;width:22.6px;height:3.3px;background:#2aa198"></div>
<!-- panel header -->
<div class="pt" style="left:769.500px">问题</div>
<div class="pt" style="left:865.500px">输出</div>
<div class="pt" style="left:962.800px">调试控制台</div>
<div class="pt" style="left:1127.700px;color:#5b5953">终端</div>
<div class="pt" style="left:1224.800px">端口</div>
<div class="pt" style="left:1321.500px">串行监视器</div>
<div class="a" style="left:1124px;top:1156.600px;width:53.400px;height:2.200px;background:#5b5953"></div>
<div class="t" style="left:2298px;top:1113px;font-size:24.100px;color:#66635b">CMake/Launch - current - current</div>
<svg style="left:2170px;top:1112px" width="790" height="46" fill="none" stroke="#4a4843" stroke-width="2.150" stroke-linecap="round" stroke-linejoin="round">
<path d="M19.500 8.500v27M6 22h27"/><path d="M47.500 20l7.300 7l7.300-7" stroke-width="2"/>
<rect x="88.500" y="8" width="28" height="28" rx="2.500"/><path d="M95 15.500l6.500 6.500l-6.500 6.500M104 29h8" stroke-width="2.300"/>
<rect x="509" y="9" width="25" height="25.500" rx="2.500"/><path d="M521.500 9.500v25"/>
<path d="M562 15h24M569 15v-3.500h10V15M565 15.500l1.500 20h15l1.500-20M570.500 20v11.500M574 20v11.500M577.500 20v11.500" stroke-width="2.300"/>
<g fill="#4a4843" stroke="none"><circle cx="619" cy="23" r="2.400"/><circle cx="629.500" cy="23" r="2.400"/><circle cx="640" cy="23" r="2.400"/></g>
<path d="M670.500 5.500v33" stroke="#b9b5a6" stroke-width="1.600"/>
<path d="M698.500 17v-7h7M716 10h7v7M723 27v7h-7M705.500 34h-7v-7" stroke-width="2.600"/>
<path d="M757 12.500l19 19M776 12.500l-19 19" stroke-width="2.500"/>
</svg>
<!-- terminal -->
<div class="tr" style="top:1192.0px">/home/texsd/Workdir/learn_project/out/build/linux-clang-ninja-debug/src/current/current</div>
<div class="tr" style="top:1231.8px"><span class="tu">texsd</span>@spin:<span class="tp">~/W/l/o/b/l/s/current</span></div>
<div class="tr" style="top:1271.7px"><span class="ar">➤</span> /home/texsd/Workdir/learn_project/out/build/linux-clang-ninja-debug/src/current/current</div>
<div class="tr" style="top:1311.5px">I saw a blue car yesterday.</div>
<div class="tr" style="top:1351.4px"><span class="tu">texsd</span>@spin:<span class="tp">~/W/l/o/b/l/s/current</span></div>
<div class="tr" style="top:1391.2px"><span class="ar">➤</span> /home/texsd/Workdir/learn_project/out/build/linux-clang-ninja-debug/src/current/current</div>
<div class="tr" style="top:1431.1px">I saw a blue car yesterday.</div>
<div class="tr" style="top:1471.0px"><span class="tu">texsd</span>@spin:<span class="tp">~/W/l/o/b/l/s/current</span></div>
<div class="tr" style="top:1510.8px"><span class="ar">➤</span> </div>
<div class="a" style="left:803.4px;top:1508px;width:17.6px;height:38px;border:2.4px solid #2f2d2a"></div>
<!-- status bar -->
<div class="a" style="left:0;top:1626px;width:67px;height:47px;background:#ac9d57"></div>
<svg style="left:20px;top:1634px" width="30" height="30" fill="none" stroke="#fdfaf0" stroke-width="2.200" stroke-linecap="round" stroke-linejoin="round"><path d="M2.700 10l8.300 7.500l-8.300 8.500M20.300 2.800l-8.100 7.200l8.100 7.500"/></svg>
<svg style="left:84px;top:1635px" width="90" height="30" fill="none" stroke="#586e75" stroke-width="2.200" stroke-linecap="round" stroke-linejoin="round"><circle cx="14" cy="14.500" r="11.500"/><path d="M9 9.500l10 10M19 9.500l-10 10"/><path d="M69.500 3.500l11.500 22h-23zM69.500 11.500v7.500M69.500 22v.6"/></svg>
<div class="st l" style="left:120.500px">0</div>
<div class="st l" style="left:174.500px">0</div>
<div class="st l" style="left:222px;font-size:26.900px">clangd: idle</div>
<svg style="left:392.500px;top:1636.500px" width="25" height="25" viewBox="-14 -14 28 28" fill="none" stroke="#586e75" stroke-width="2.200" stroke-linejoin="round"><circle r="3.600"/><path d="M-2.200-12.500h4.400l.8 3.300l2.300 1l2.900-1.800l3.100 3.100l-1.800 2.900l1 2.300l3.300 .8v4.400l-3.300 .8l-1 2.300l1.800 2.900l-3.100 3.100l-2.900-1.800l-2.300 1l-.8 3.300h-4.400l-.8-3.300l-2.300-1l-2.900 1.800l-3.100-3.100l1.800-2.900l-1-2.300l-3.300-.8v-4.400l3.300-.8l1-2.300l-1.800-2.900l3.100-3.100l2.900 1.800l2.300-1z"/></svg>
<div class="st" style="left:425.500px">生成</div>
<div class="a" style="left:499px;top:1626px;width:50px;height:48px;border:1.600px solid #5d7a85"></div>
<svg style="left:514px;top:1637px" width="22" height="26" fill="none" stroke="#586e75" stroke-width="2.300" stroke-linejoin="round"><path d="M2 2l16 11l-16 11z"/></svg>
<div class="st" style="left:2380.500px;letter-spacing:-.9px">行 <span class="l">5</span>，列 <span class="l">1</span></div>
<div class="st" style="left:2529px">空格<span class="l" style="font-size:23.500px">: 4</span></div>
<div class="st l" style="left:2640px;font-size:26px;letter-spacing:-1.250px">UTF-8</div>
<div class="st l" style="left:2743.500px;font-size:26px;letter-spacing:-2.200px">LF</div>
<div class="st l" style="left:2805.500px;letter-spacing:3.500px;font-size:25px">{}</div><div class="st l" style="left:2846.500px;font-size:25px;letter-spacing:-1.850px">C++</div>
<svg style="left:2926px;top:1636px" width="26" height="28" fill="none" stroke="#586e75" stroke-width="2.300" stroke-linejoin="round" stroke-linecap="round"><path d="M3 20.500c2.500-2 2.500-5 2.500-9a7.500 7.500 0 0 1 15 0c0 4 0 7 2.500 9zM10 21a3 3 0 0 0 6 0"/></svg>

<!-- tooltip + arrows -->
<div class="a" style="left:298px;top:1570px;width:454px;height:50px;border-radius:6px;background:#cdc9b8;box-shadow:0 3px 8px rgba(90,80,50,.28)"></div>
<svg style="left:516px;top:1619px" width="18" height="8"><path d="M0 0h18l-9 8z" fill="#cdc9b8"/></svg>
<div class="t" style="left:317px;top:1573px;font-size:25.400px;color:#6d6a62">在终端窗口中启动所选目标<span class="l" style="font-size:26.300px">: [current]</span></div>
<svg style="left:0;top:0" width="700" height="1673"><path d="M464.200 1428.300L466 1428.300L444.500 1590L448.400 1590.400L430 1616L421.800 1586.600L430.500 1589Z" fill="#fb8427"/><path d="M576.200 1459.400L577.800 1459.600L548.700 1588.500L555.400 1586.600L534.200 1609.800L528.800 1579.100L537.400 1582Z" fill="#fb8427"/></svg>

</body>
</html>
